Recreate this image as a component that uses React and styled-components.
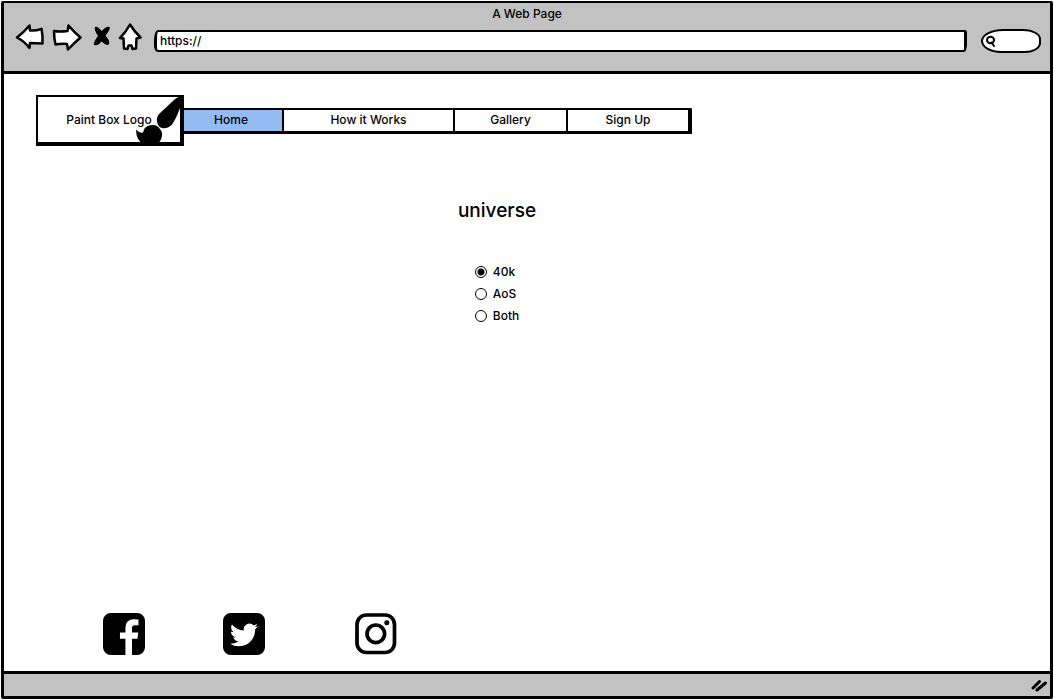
import React from "react";
import styled, { createGlobalStyle } from "styled-components";

const GlobalStyle = createGlobalStyle`
  *, *::before, *::after { box-sizing: border-box; }
  body {
    margin: 0;
    background: #fff;
    color: #000;
    font: 500 12px/20px Inter, "Liberation Sans", sans-serif;
  }
`;

const Shell = styled.div`
  display: flex;
  min-height: 100vh;
  padding: 1px;
`;

const Frame = styled.div`
  flex: 1;
  display: flex;
  flex-direction: column;
  border: 3px solid #000;
  border-top-width: 2px;
  border-radius: 2px;
  min-width: 0;
`;

const Chrome = styled.header`
  height: 71px;
  background: #c2c2c2;
  border-bottom: 3px solid #000;
`;

const Title = styled.div`
  padding-top: 1px;
  text-align: center;
`;

const Toolbar = styled.div`
  display: flex;
  align-items: flex-start;
  gap: 12px;
  padding: 0 9px 0 12px;
`;

const Buttons = styled.div`
  display: flex;
  gap: 8px;
`;

const IconButton = styled.button`
  display: block;
  padding: 0;
  border: 0;
  background: none;
  cursor: pointer;

  svg {
    display: block;
    overflow: visible;
    fill: ${(p) => (p.$solid ? "#000" : "#fff")};
    stroke: #000;
    stroke-width: 2.5;
    stroke-linejoin: round;
    stroke-linecap: round;
  }
`;

const Address = styled.input`
  flex: 1;
  min-width: 0;
  height: 22px;
  margin-top: 6px;
  padding: 0 3px 2px;
  border: 2px solid #000;
  border-left-width: 3px;
  border-right-width: 3px;
  border-radius: 4px 2px 3px 4px / 10px 3px 8px 6px;
  background: #fff;
  color: #000;
  font: inherit;
  outline: none;
`;

const Search = styled.label`
  display: flex;
  align-items: center;
  width: 60px;
  height: 24px;
  margin: 5px 0 0 2px;
  padding-left: 3px;
  border: 2px solid #000;
  border-radius: 22px 18px 16px 20px / 12px 10px 10px 12px;
  background: #fff;

  svg {
    flex: none;
    fill: none;
    stroke: #000;
    stroke-width: 2;
    stroke-linecap: round;
  }

  input {
    min-width: 0;
    width: 100%;
    padding: 0 4px;
    border: 0;
    background: none;
    font: inherit;
    outline: none;
  }
`;

const Main = styled.main`
  flex: 1;
  display: flex;
  flex-direction: column;
  padding: 21px 32px 16px;
`;

const TopBar = styled.div`
  display: flex;
  align-items: center;
`;

const Logo = styled.a`
  position: relative;
  z-index: 1;
  display: flex;
  align-items: center;
  justify-content: center;
  width: 148px;
  height: 51px;
  border: 2px solid #000;
  border-right-width: 4px;
  border-bottom-width: 4px;
  background: #fff;
  color: #000;
  text-decoration: none;

  svg {
    position: absolute;
    right: -4px;
    bottom: -4px;
  }
`;

const Nav = styled.nav`
  display: flex;
  height: 26px;
  margin-left: -4px;
  border: solid #000;
  border-width: 2px 4px 3px 0;
  border-top-right-radius: 2px;
`;

const NavLink = styled.a`
  width: ${(p) => p.$width}px;
  border-right: 2px solid #000;
  background: ${(p) => (p.$active ? "#95bbf3" : "#fff")};
  color: #000;
  text-align: center;
  text-decoration: none;

  &:last-child {
    border-right: 0;
  }
`;

const Universe = styled.fieldset`
  display: flex;
  flex-direction: column;
  align-items: center;
  margin: 53px 0 0;
  padding: 0 60px 0 0;
  border: 0;
`;

const Heading = styled.legend`
  display: block;
  width: 100%;
  padding: 0;
  font-size: 19px;
  line-height: 24px;
  text-align: center;
`;

const Options = styled.div`
  margin-top: 38px;
`;

const Option = styled.label`
  display: flex;
  align-items: center;
  gap: 6px;
  height: 22px;

  input {
    appearance: none;
    width: 12px;
    height: 12px;
    margin: 0;
    border: 1px solid #000;
    border-radius: 50%;
    background: #fff;
  }

  input:checked {
    background: radial-gradient(circle, #000 3px, #fff 4px);
  }
`;

const Socials = styled.div`
  display: grid;
  grid-template-columns: 120px 132px 42px;
  margin-top: auto;
  padding-left: 67px;
`;

const SocialLink = styled.a`
  width: 42px;
  height: 42px;
  color: #000;

  svg {
    display: block;
  }
`;

const StatusBar = styled.footer`
  display: flex;
  align-items: center;
  justify-content: flex-end;
  height: 25px;
  padding-right: 2px;
  border-top: 3px solid #000;
  background: #c2c2c2;
`;

const links = [
  { label: "Home", width: 104, active: true },
  { label: "How it Works", width: 171 },
  { label: "Gallery", width: 113 },
  { label: "Sign Up", width: 120 },
];

export default function App() {
  return (
    <>
      <GlobalStyle />
      <Shell>
        <Frame>
          <Chrome>
            <Title>A Web Page</Title>
            <Toolbar>
              <Buttons>
                <IconButton aria-label="Back">
                  <svg width="28" height="28" viewBox="16 24 28 28">
                    <path d="M17 37.500 Q24 32 29.500 25.500 L30 30.500 Q36 31 41.500 28.800 Q43 36 42.500 43.500 L30 43 L29.500 48 Q24 41 17 37.500Z" />
                  </svg>
                </IconButton>
                <IconButton aria-label="Forward">
                  <svg width="30" height="28" viewBox="52 24 30 28">
                    <path d="M54 31 Q60 32 67.500 31 L68.500 25.500 Q74 32 80.500 37.500 Q74 43 68 49.500 L67 44 Q61 43.500 55.500 44.500 Q54 38 54 31Z" />
                  </svg>
                </IconButton>
                <IconButton aria-label="Stop" $solid>
                  <svg width="20" height="28" viewBox="90 24 20 28">
                    <path d="M96 28 Q98 28 101.500 33 Q106 28 108.500 28 Q108.500 30 104 35.500 Q109 41.500 108 43.500 Q106 44.500 101.500 39.500 Q98 44.500 95 44 Q95 42 99.500 36 Q95.500 30 96 28Z" />
                  </svg>
                </IconButton>
                <IconButton aria-label="Home page">
                  <svg width="24" height="28" viewBox="118 24 24 28">
                    <path d="M130 24.500 Q134 31 140.500 37.500 L136.500 38.500 L136 48.500 L132.500 49 L131.500 45.500 L128.500 45.500 L127.500 49 L124 48.500 L123.500 38.500 L120 38 Q126 32 130 24.500Z" />
                  </svg>
                </IconButton>
              </Buttons>
              <Address aria-label="Address" defaultValue="https://" />
              <Search>
                <svg width="11" height="12" viewBox="0 0 11 12">
                  <ellipse cx="4.500" cy="5" rx="3.500" ry="3.200" />
                  <path d="M5.500 7.500 L8 11" />
                </svg>
                <input type="text" aria-label="Search" />
              </Search>
            </Toolbar>
          </Chrome>

          <Main>
            <TopBar>
              <Logo href="#">
                Paint Box Logo
                <svg width="48" height="50" viewBox="136 96 48 50">
                  <path d="M184 96 Q178 96 174 100 L159 114 Q156 118 157 121.500 Q158 127 162 128 Q168 129 172 124.500 Q176 119 180 108Z" />
                  <path d="M136 129.500 Q139.500 133.500 143 132.500 Q144 125.500 151.500 125 Q157.500 124.500 159.500 128.500 Q162.500 131 162 136 Q161 142 156 145 L145 145 Q136 141.500 136 129.500Z" />
                </svg>
              </Logo>
              <Nav>
                {links.map((l) => (
                  <NavLink key={l.label} href="#" $width={l.width} $active={l.active}>
                    {l.label}
                  </NavLink>
                ))}
              </Nav>
            </TopBar>

            <Universe>
              <Heading>universe</Heading>
              <Options>
                {["40k", "AoS", "Both"].map((name, i) => (
                  <Option key={name}>
                    <input type="radio" name="universe" value={name} defaultChecked={i === 0} />
                    {name}
                  </Option>
                ))}
              </Options>
            </Universe>

            <Socials>
              <SocialLink href="#" aria-label="Facebook">
                <svg width="42" height="42" viewBox="0 128 1536 1536">
                  <path d="M1248 128q119 0 203.500 84.500t84.500 203.500v960q0 119-84.500 203.500t-203.500 84.500h-188v-595h199l30-232h-229v-148q0-56 23.500-84t91.500-28l122-1v-207q-63-9-178-9-136 0-217.500 80t-81.500 226v171h-200v232h200v595h-532q-119 0-203.500-84.500t-84.500-203.500v-960q0-119 84.500-203.500t203.500-84.500h960z" />
                </svg>
              </SocialLink>
              <SocialLink href="#" aria-label="Twitter">
                <svg width="42" height="42" viewBox="0 128 1536 1536">
                  <path d="M1280 610q-56 25-121 34 68-40 93-117-65 38-134 51-61-66-153-66-87 0-148.500 61.500t-61.500 148.500q0 29 5 48-129-7-242-65t-192-155q-29 50-29 106 0 114 91 175-47-1-100-26v2q0 75 50 133.500t123 72.500q-29 8-51 8-13 0-39-4 21 63 74.500 104t121.500 42q-116 90-261 90-26 0-50-3 148 94 322 94 112 0 210-35.500t168-95 120.500-137 75-162 24.500-168.500q0-18-1-27 63-45 105-109zm256-194v960q0 119-84.500 203.500t-203.500 84.500h-960q-119 0-203.500-84.500t-84.500-203.500v-960q0-119 84.500-203.500t203.500-84.500h960q119 0 203.500 84.500t84.500 203.500z" />
                </svg>
              </SocialLink>
              <SocialLink href="#" aria-label="Instagram">
                <svg width="42" height="42" viewBox="0 0 42 42" fill="none" stroke="#000" strokeWidth="3.700">
                  <rect x="2" y="2" width="37.500" height="37.500" rx="9.500" />
                  <circle cx="20.800" cy="20.800" r="8.800" />
                  <circle cx="31.800" cy="9.800" r="2.500" fill="#000" stroke="none" />
                </svg>
              </SocialLink>
            </Socials>
          </Main>

          <StatusBar>
            <svg width="17" height="14" viewBox="0 0 17 14" fill="none" stroke="#000" strokeWidth="3" strokeLinecap="round">
              <path d="M2 10 L8.500 3.500 M6 12 L14.500 5" />
            </svg>
          </StatusBar>
        </Frame>
      </Shell>
    </>
  );
}
